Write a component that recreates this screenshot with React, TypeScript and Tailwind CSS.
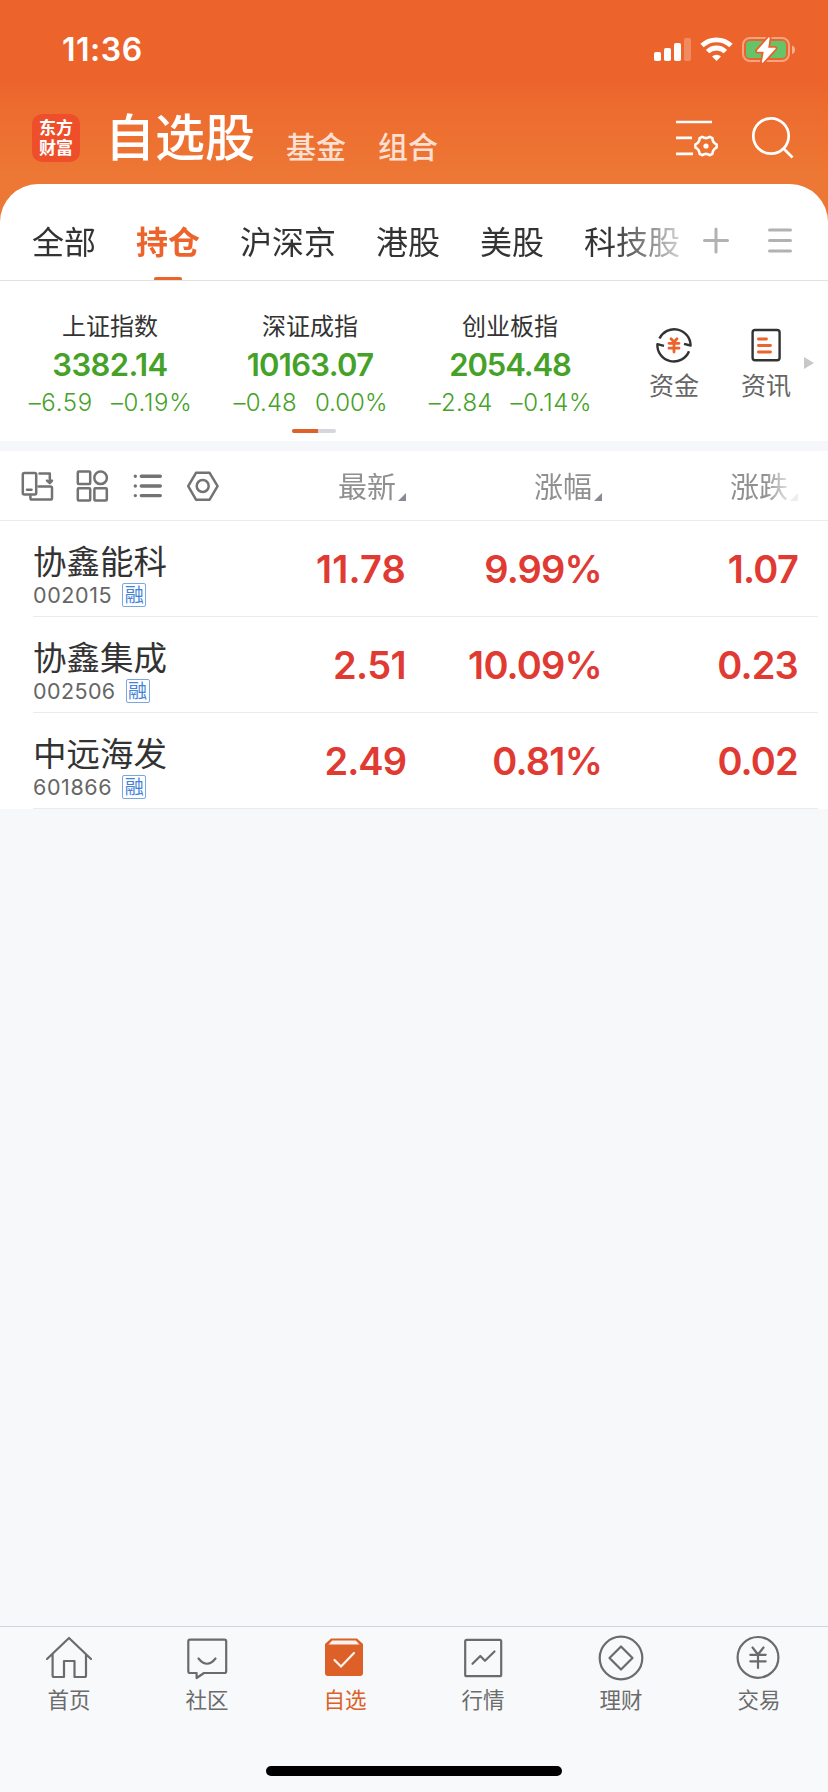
import type { ReactNode } from "react";

const CJK = "font-['Noto_Sans_CJK_SC',sans-serif]";
const TIGHT = "font-['Liberation_Sans','Noto_Sans_CJK_SC',sans-serif]";
const NUM = "font-['Inter',sans-serif]";

type IconProps = { box: string; className: string; children: ReactNode };

function Icon({ box, className, children }: IconProps) {
  return (
    <svg
      viewBox={box}
      className={`block shrink-0 ${className}`}
      fill="none"
      stroke="currentColor"
      strokeLinecap="round"
      strokeLinejoin="round"
    >
      {children}
    </svg>
  );
}

function StatusBar() {
  return (
    <div className="flex h-[100px] items-center pl-[62px] pr-[33px]">
      <div className={`${NUM} flex-1 text-[32px] font-semibold leading-[40px] tracking-[0.5px]`}>11:36</div>
      <Icon box="0 0 144 32" className="h-8 w-36">
        <g fill="#fff" stroke="none">
          <rect x="3" y="18" width="7" height="9" rx="1.8" />
          <rect x="13" y="14" width="7" height="13" rx="1.8" />
          <rect x="23" y="9" width="7" height="18" rx="1.8" />
          <rect x="33" y="4" width="7" height="23" rx="1.8" opacity=".25" />
          <path d="M65.5 27 L61 22.6 A6.6 6.6 0 0 1 70 22.6 Z" />
        </g>
        <g stroke="#fff" strokeWidth="4.8" strokeLinecap="butt">
          <path d="M51 11.6 A21 21 0 0 1 80 11.6" />
          <path d="M56.6 17.6 A12.8 12.8 0 0 1 74.4 17.6" />
        </g>
        <rect x="92" y="4" width="46" height="23" rx="7" stroke="#fff" strokeOpacity=".42" strokeWidth="2" />
        <path d="M141 11.5 q3 1 3 4.3 t-3 4.3 z" fill="#fff" fillOpacity=".5" stroke="none" />
        <rect x="95" y="7" width="40" height="17" rx="4" fill="#66c468" stroke="none" />
        <path
          d="M118 4 L106.6 17 H113.6 L111.6 28 L124 14.4 H116.4 Z"
          fill="#fff"
          stroke="#eb632c"
          strokeWidth="5"
        />
        <path d="M118 4 L106.6 17 H113.6 L111.6 28 L124 14.4 H116.4 Z" fill="#fff" stroke="#fff" strokeWidth="1.4" />
      </Icon>
    </div>
  );
}

function Header() {
  return (
    <div className="flex h-[76px] items-center pl-[32px]">
      <div
        className={`${TIGHT} flex size-12 flex-col items-center justify-center rounded-[10px] bg-[#ee4f2a] pt-[1px] text-[17px] font-bold leading-[20px]`}
      >
        <div>东方</div>
        <div>财富</div>
      </div>
      <h1 className={`${CJK} -mt-[8px] ml-[25px] w-[150px] whitespace-nowrap text-[50px] font-medium leading-[74px]`}>
        自选股
      </h1>
      <div className={`${CJK} flex gap-[32px] pl-[31px] pt-[13px] text-[30px] font-medium leading-[40px] text-[#fbdfd0]`}>
        <span>基金</span>
        <span>组合</span>
      </div>
      <Icon box="674 117 46 42" className="ml-[236px] h-[42px] w-[46px]">
        <g strokeWidth="2.7" strokeLinecap="butt">
          <path d="M676 122H712M676 137.8H692M676 153.8H693" />
          <path
            strokeWidth="2.6"
            d="M702.2 136.8 Q706 139.6 709.8 136.8 L712.4 138.2 Q712.6 142.6 716.6 144.4 V147.6 Q712.6 149.4 712.4 153.8 L709.8 155.2 Q706 152.4 702.2 155.2 L699.6 153.8 Q699.4 149.4 695.4 147.6 V144.4 Q699.4 142.6 699.6 138.2 Z"
          />
          <circle cx="706" cy="146" r="2.6" fill="currentColor" stroke="none" />
        </g>
      </Icon>
      <Icon box="750 115 46 46" className="ml-[30px] size-[46px]">
        <g strokeWidth="2.7" strokeLinecap="butt">
          <circle cx="771" cy="136" r="17.7" />
          <path d="M783.5 148.5 L792.5 157.5" />
        </g>
      </Icon>
    </div>
  );
}

const TABS = ["全部", "持仓", "沪深京", "港股", "美股", "科技股"];

function CategoryTabs() {
  return (
    <div className="flex h-[97px] border-b border-[#e2e2e2]">
      <div
        className={`${CJK} flex w-[682px] gap-[40px] pl-[32px] text-[32px] text-[#333] [mask-image:linear-gradient(to_right,#000_610px,rgba(0,0,0,0.2)_682px)]`}
      >
        {TABS.map((t) => (
          <div
            key={t}
            className={`relative whitespace-nowrap leading-[112px] ${t === "持仓" ? "font-bold text-[#ec632b]" : ""}`}
          >
            {t}
            {t === "持仓" && (
              <span className="absolute left-[18px] top-[93px] h-[4px] w-[28px] rounded-full bg-[#ec632b]" />
            )}
          </div>
        ))}
      </div>
      <div className="flex flex-1 pt-[42px] text-[#b2b2b2]">
        <Icon box="702 226 28 30" className="ml-[20px] h-[30px] w-[28px]">
          <path strokeWidth="3" d="M704.5 240.5H727.5M716 229V252" />
        </Icon>
        <Icon box="766 226 28 30" className="ml-[36px] h-[30px] w-[28px]">
          <path strokeWidth="3" d="M769.5 230H790.5M769.5 240.5H790.5M769.5 251H790.5" />
        </Icon>
      </div>
    </div>
  );
}

const INDICES = [
  { name: "上证指数", value: "3382.14", diff: "–6.59", pct: "–0.19%", valueFit: "tracking-[-0.6px]", diffFit: "tracking-[0.7px]", pctFit: "tracking-[0.7px]" },
  { name: "深证成指", value: "10163.07", diff: "–0.48", pct: "0.00%", valueFit: "tracking-[-0.7px]", diffFit: "tracking-[0.1px]", pctFit: "" },
  { name: "创业板指", value: "2054.48", diff: "–2.84", pct: "–0.14%", valueFit: "tracking-[-1.1px]", diffFit: "tracking-[0.2px]", pctFit: "tracking-[0.6px]" },
];

function IndexPanel() {
  return (
    <div className="flex h-[160px] flex-col">
      <div className="flex h-[148px] pl-[10px]">
        {INDICES.map((i) => (
          <div key={i.name} className="flex w-[200px] flex-col items-center pt-[24px] text-[#45a127]">
            <div className={`${CJK} text-[24px] leading-[39px] text-[#333]`}>{i.name}</div>
            <div className={`${NUM} text-[31px] font-semibold leading-[42px] ${i.valueFit}`}>{i.value}</div>
            <div className={`${NUM} flex gap-[18px] pl-[1px] text-[24px] font-light leading-[34px]`}>
              <span className={i.diffFit}>{i.diff}</span>
              <span className={i.pctFit}>{i.pct}</span>
            </div>
          </div>
        ))}
        <div className={`${CJK} flex w-[128px] flex-col items-center pt-[44px] text-[25px] text-[#666]`}>
          <Icon box="654 325 40 40" className="size-10">
            <g stroke="#333" strokeWidth="2.4" strokeLinecap="butt">
              <path d="M659.4 338.6 A16.4 16.4 0 0 1 690.6 345.5 L684 343.8" />
              <path d="M689 351.2 A16.4 16.4 0 0 1 657.4 344.2 L664 345.8" />
            </g>
            <path stroke="#ec632b" strokeWidth="2.8" d="M671 338.8 L674 342 L677 338.8 M669 343.3H679 M669 348.2H679 M674 343V352" />
          </Icon>
          <span className="leading-[38px]">资金</span>
        </div>
        <div className={`${CJK} -ml-[8px] flex w-[72px] flex-col items-center pt-[44px] text-[25px] text-[#666]`}>
          <Icon box="746 325 40 40" className="size-10">
            <rect x="752.6" y="330" width="27" height="30.2" rx="2.5" stroke="#333" strokeWidth="2.4" />
            <path stroke="#ec632b" strokeWidth="2.8" d="M758.4 339H766.5M758.4 345.5H770.5M758.4 352H770.5" />
          </Icon>
          <span className="leading-[38px]">资讯</span>
        </div>
        <Icon box="0 0 10 12" className="ml-[2px] mt-[76px] h-[12px] w-[10px] text-[#c8c8c8]">
          <path d="M0 0L10 6L0 12Z" fill="currentColor" stroke="none" />
        </Icon>
      </div>
      <div className="ml-[292px] flex h-[4px] w-[44px] overflow-hidden rounded-full bg-[#d6d7de]">
        <div className="w-[26px] bg-[#dd6128]" />
      </div>
    </div>
  );
}

function SortHead({ label, className }: { label: string; className: string }) {
  return (
    <div className={`flex items-end justify-end gap-[2px] ${className}`}>
      <span className="leading-[40px]">{label}</span>
      <svg viewBox="0 0 8 8" className="mb-[4px] size-2 text-[#8a8a93]">
        <path d="M8 0V8H0Z" fill="currentColor" />
      </svg>
    </div>
  );
}

function ListToolbar() {
  return (
    <div className="flex h-[70px] items-center border-b border-[#ebebeb]">
      <div className="flex w-[230px] text-[#737373]">
        <Icon box="20 468 36 36" className="ml-[20px] size-9">
          <g strokeWidth="2.5">
            <rect x="22.8" y="473" width="13.4" height="21.4" rx="1.5" />
            <path d="M27 489.8H31.5M30.4 496V498q0 1.6 1.6 1.6H50.4q1.6 0 1.6-1.6V488q0-1.6-1.6-1.6H38.5M39.5 473.6H49.8V481M47 480.6l2.8 2.6 2.2-2.6" />
          </g>
        </Icon>
        <Icon box="74 468 36 36" className="ml-[18px] size-9">
          <g strokeWidth="2.5">
            <rect x="77.8" y="471.6" width="12.4" height="12.4" rx="1" />
            <circle cx="100.6" cy="477.8" r="6.3" />
            <rect x="77.8" y="488.2" width="12.4" height="12.4" rx="1" />
            <rect x="94.4" y="488.2" width="12.4" height="12.4" rx="1" />
          </g>
        </Icon>
        <Icon box="130 468 36 36" className="ml-[20px] size-9">
          <path strokeWidth="3.4" d="M141.3 476.3H160.3M141.3 486H160.3M141.3 495.6H160.3M135.3 476.3h.01M135.3 486h.01M135.3 495.6h.01" />
        </Icon>
        <Icon box="185 468 36 36" className="ml-[19px] size-9">
          <g strokeWidth="2.5">
            <path d="M196 472.8H209.6L217.6 486.2L209.6 499.7H196L188.2 486.2Z" />
            <circle cx="202.7" cy="486" r="6" />
          </g>
        </Icon>
      </div>
      <div
        className={`${CJK} -mt-[2px] flex text-[29px] text-[#909090] [mask-image:linear-gradient(to_right,#000_535px,rgba(0,0,0,0.15)_562px)]`}
      >
        <SortHead label="最新" className="w-[176px]" />
        <SortHead label="涨幅" className="w-[196px]" />
        <SortHead label="涨跌" className="w-[196px]" />
      </div>
    </div>
  );
}

const STOCKS = [
  { name: "协鑫能科", code: "002015", price: "11.78", pct: "9.99%", diff: "1.07", priceFit: "tracking-[0.2px]", codeFit: "tracking-[0.6px]" },
  { name: "协鑫集成", code: "002506", price: "2.51", pct: "10.09%", diff: "0.23", priceFit: "tracking-[-0.6px]", codeFit: "tracking-[0.4px]" },
  { name: "中远海发", code: "601866", price: "2.49", pct: "0.81%", diff: "0.02", priceFit: "tracking-[-1px]", codeFit: "tracking-[0.6px]" },
];

function StockRow({ s }: { s: (typeof STOCKS)[number] }) {
  return (
    <div className="bg-white pl-[33px] pr-[10px]">
      <div className="flex h-[96px] border-b border-[#ebebeb]">
        <div className="w-[180px] pt-[22px]">
          <div className={`${TIGHT} whitespace-nowrap text-[33.5px] leading-[40px] text-[#333]`}>{s.name}</div>
          <div className="flex items-center gap-[10px]">
            <span className={`${NUM} text-[21.5px] leading-[24px] text-[#666] ${s.codeFit}`}>{s.code}</span>
            <span
              className={`${TIGHT} flex size-6 items-center justify-center rounded-[2px] border border-[#7ba6e4] pt-[2px] text-[19px] leading-[20px] text-[#4483d8]`}
            >
              融
            </span>
          </div>
        </div>
        <div className={`${NUM} flex text-right text-[38px] font-semibold leading-[96px] tracking-[-0.8px] text-[#e03a33]`}>
          <span className={`w-[193px] ${s.priceFit}`}>{s.price}</span>
          <span className="w-[196px]">{s.pct}</span>
          <span className="w-[196px]">{s.diff}</span>
        </div>
      </div>
    </div>
  );
}

const NAV: { label: string; box: string; art: ReactNode }[] = [
  {
    label: "首页",
    box: "45 1634 48 48",
    art: <path d="M47 1659L69 1638L91 1659M52.6 1654.5V1675.5q0 1.5 1.5 1.5H64V1661H74.5V1677H84.5q1.5 0 1.5-1.5V1654.5" />,
  },
  {
    label: "社区",
    box: "183 1634 48 48",
    art: <path d="M190 1639.7H224.5q1.7 0 1.7 1.7V1671.3q0 1.7-1.7 1.7H204L196.6 1678V1673H190q-1.7 0-1.7-1.7V1641.4q0-1.7 1.7-1.7ZM198.5 1658.5Q207 1669 215.5 1658.5" />,
  },
  {
    label: "自选",
    box: "321 1634 48 48",
    art: (
      <>
        <path d="M325 1644L331 1638.4H357L363 1644V1673q0 3-3 3H328q-3 0-3-3Z" fill="currentColor" stroke="none" />
        <path d="M328.5 1644.6L332.3 1640.4H355.7L359.5 1644.6Z" fill="#f8f1ee" stroke="none" />
        <path d="M334.5 1660L341 1666.6L354 1653" stroke="#faf3ef" />
      </>
    ),
  },
  {
    label: "行情",
    box: "459 1634 48 48",
    art: (
      <>
        <rect x="465.2" y="1639.8" width="36" height="36.4" rx="1.5" />
        <path d="M472.5 1663.8L480.3 1656L485 1660.8L494.5 1651.5" />
      </>
    ),
  },
  {
    label: "理财",
    box: "597 1634 48 48",
    art: (
      <>
        <circle cx="621" cy="1658" r="21.3" />
        <path d="M621 1646.5L632.5 1658L621 1669.5L609.5 1658Z" />
      </>
    ),
  },
  {
    label: "交易",
    box: "735 1634 48 48",
    art: (
      <>
        <circle cx="758" cy="1657.4" r="20.4" />
        <path d="M752.5 1647.5L758 1654.5L763.5 1647.5M750.3 1654.8H765.7M750.3 1661.3H765.7M758 1655V1668" />
      </>
    ),
  },
];

function BottomNav() {
  return (
    <div className="flex h-[166px] flex-col items-center border-t border-[#d3d4de] bg-[#f8f9fb]">
      <div className="flex w-full">
        {NAV.map((n) => (
          <div
            key={n.label}
            className={`flex w-[138px] flex-col items-center pt-[7px] ${n.label === "自选" ? "text-[#dc6027]" : "text-[#6b6b6b]"}`}
          >
            <Icon box={n.box} className="size-12">
              <g strokeWidth="2.2">{n.art}</g>
            </Icon>
            <span className={`${CJK} text-[21.5px] leading-[34px]`}>{n.label}</span>
          </div>
        ))}
      </div>
      <div className="mt-[50px] h-[10px] w-[296px] rounded-full bg-black" />
    </div>
  );
}

export default function App() {
  return (
    <div className="flex h-[1792px] w-[828px] flex-col overflow-hidden bg-[#f7f8fa]">
      <div className="h-[184px] text-white">
        <div className="h-[224px] bg-[linear-gradient(to_bottom,#ec632b_0px,#ec632b_78px,#ed6b2f_105px,#ed7734_175px,#ed7734_224px)]">
          <StatusBar />
          <Header />
        </div>
      </div>
      <div className="relative rounded-t-[38px] bg-white">
        <CategoryTabs />
        <IndexPanel />
      </div>
      <div className="h-[10px] shrink-0 bg-[#f5f7fa]" />
      <div className="bg-white">
        <ListToolbar />
        {STOCKS.map((s) => (
          <StockRow key={s.code} s={s} />
        ))}
      </div>
      <div className="flex-1" />
      <BottomNav />
    </div>
  );
}
